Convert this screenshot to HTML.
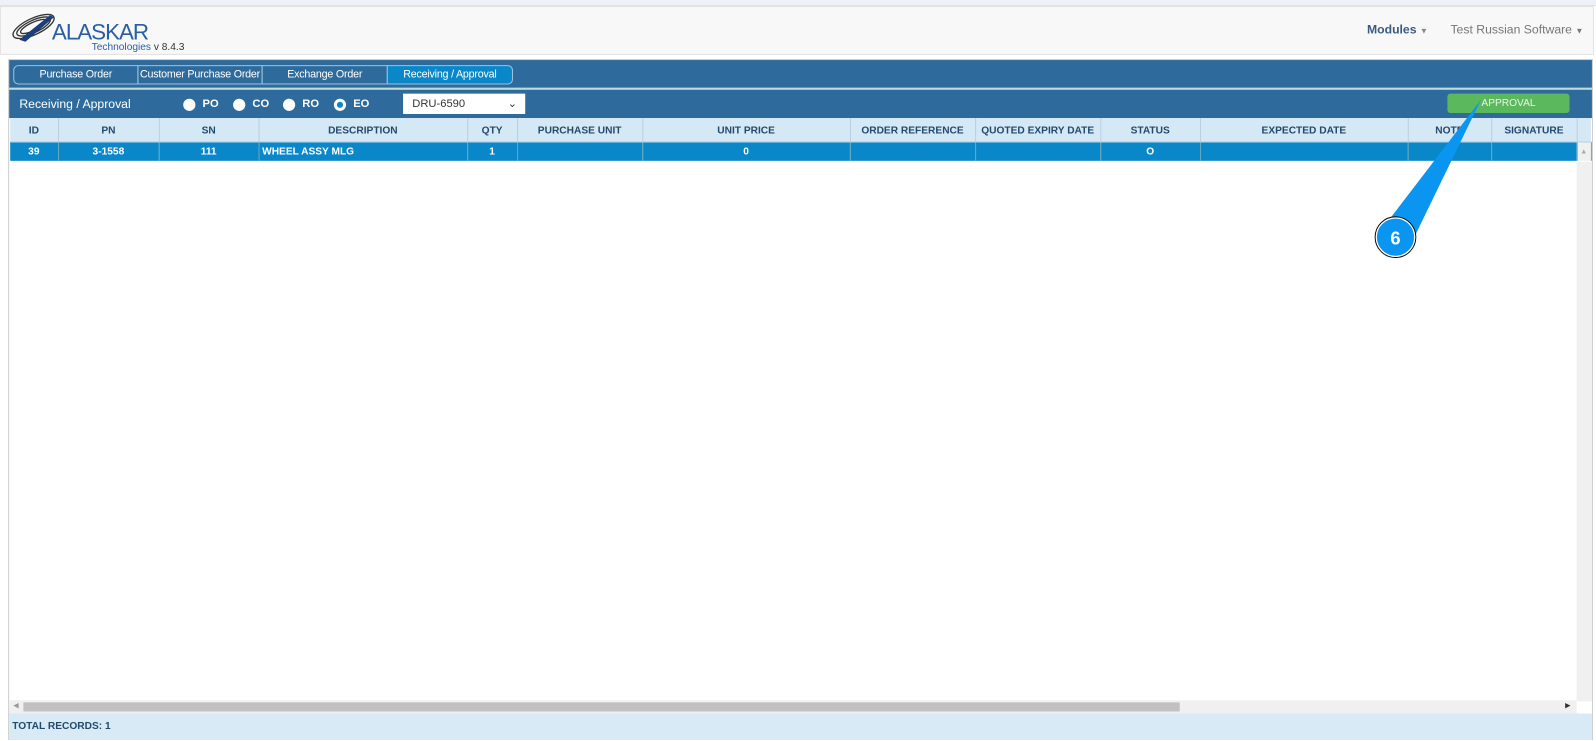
<!DOCTYPE html>
<html><head><meta charset="utf-8"><style>
*{box-sizing:border-box;margin:0;padding:0}
body{width:1596px;height:741px;background:#fff;font-family:"Liberation Sans",sans-serif;position:relative;overflow:hidden}
#w{position:absolute;left:0;top:0;width:1568px;height:728px;transform:scale(1.01786);transform-origin:0 0}
.top{position:absolute;left:0;top:0;width:1568px;height:6px;background:#eef2f8;border-bottom:1px solid #dde}
.nav{position:absolute;left:0;top:6px;width:1566px;height:48px;background:#f8f8f8;border:1px solid #e3e3e3}
.panel{position:absolute;left:8px;top:58px;width:1557px;height:669px;border:1px solid #ccc;background:#fff}
.tabs{position:absolute;left:0;top:0;width:100%;height:28px;background:#2e6b9c;border-bottom:1px solid #9cc}
.tab{position:absolute;top:5px;height:19px;border:1px solid #9cc3de;color:#fff;font-size:10.5px;text-align:center;line-height:17px;white-space:nowrap;overflow:hidden;letter-spacing:-0.2px}
.filt{position:absolute;left:0;top:29px;width:100%;height:28px;background:#2e6b9c;color:#fff}
.rad{position:absolute;top:9px;width:12px;height:12px;border-radius:50%;background:#fff}
.rl{position:absolute;top:8px;font-size:11px;font-weight:bold}
table{position:absolute;left:1px;top:57px;border-collapse:collapse;font-size:10px;font-weight:bold}
th{background:#d5e8f6;color:#234a6b;height:23px;padding-top:2px;border-right:1px solid #b8cfe0;border-bottom:1px solid #b8cfe0;white-space:nowrap}
td{background:#0a87c9;color:#fff;height:19px;padding-top:1px;border-right:1px solid #6ab;text-align:center}
</style></head><body><div id="w">
<div class="top"></div>
<div class="nav">
<svg style="position:absolute;left:8px;top:4px" width="50" height="32" viewBox="0 0 50 32"><g fill="none" stroke="#333" stroke-width="1.3"><ellipse cx="24" cy="15" rx="22" ry="8" transform="rotate(-25 24 15)"/><ellipse cx="24" cy="15" rx="18" ry="6" transform="rotate(-25 24 15)"/><ellipse cx="24" cy="15" rx="14" ry="4" transform="rotate(-25 24 15)"/></g><path d="M10 28 L40 4 L44 6 L16 30Z" fill="#1a3f7a"/></svg>
<div style="position:absolute;left:50px;top:12px;font-size:22px;color:#2a5ea3;letter-spacing:-1px">ALASKAR</div>
<div style="position:absolute;left:89px;top:34px;font-size:10px;color:#2a5ea3">Technologies <span style="color:#333">v 8.4.3</span></div>
<div style="position:absolute;left:1342px;top:15px;font-size:12px;font-weight:bold;color:#3a5a80">Modules <span style="font-size:8px;color:#888">▼</span></div>
<div style="position:absolute;left:1424px;top:15px;font-size:12px;color:#777">Test Russian Software <span style="font-size:8px">▼</span></div>
</div>
<div class="panel">
<div class="tabs">
<div class="tab" style="left:4px;width:123px;border-radius:5px 0 0 5px">Purchase Order</div>
<div class="tab" style="left:126px;width:123px">Customer Purchase Order</div>
<div class="tab" style="left:248px;width:124px">Exchange Order</div>
<div class="tab" style="left:371px;width:124px;background:#0a87c9;border-radius:0 5px 5px 0">Receiving / Approval</div>
</div>
<div class="filt">
<div style="position:absolute;left:10px;top:7px;font-size:12px">Receiving / Approval</div>
<div class="rad" style="left:171px"></div><div class="rl" style="left:190px">PO</div>
<div class="rad" style="left:220px"></div><div class="rl" style="left:239px">CO</div>
<div class="rad" style="left:269px"></div><div class="rl" style="left:288px">RO</div>
<div class="rad" style="left:319px;border:3px solid #fff;background:#0a87c9"></div><div class="rl" style="left:338px">EO</div>
<div style="position:absolute;left:387px;top:4px;width:120px;height:20px;background:#fff;color:#333;font-size:11px;line-height:20px;padding-left:9px">DRU-6590<span style="position:absolute;right:8px;top:0">⌄</span></div>
<div style="position:absolute;left:1413px;top:4px;width:120px;height:19px;background:#5cb85c;border-radius:3px;color:#e8f5e8;font-size:10px;text-align:center;line-height:19px">APPROVAL</div>
</div>
<table>
<tr><th style="width:47px">ID</th><th style="width:99px">PN</th><th style="width:98px">SN</th><th style="width:205px">DESCRIPTION</th><th style="width:49px">QTY</th><th style="width:123px">PURCHASE UNIT</th><th style="width:204px">UNIT PRICE</th><th style="width:123px">ORDER REFERENCE</th><th style="width:123px">QUOTED EXPIRY DATE</th><th style="width:98px">STATUS</th><th style="width:204px">EXPECTED DATE</th><th style="width:82px">NOTE</th><th style="width:84px">SIGNATURE</th><th style="width:14px;border-right:0"></th></tr>
<tr><td>39</td><td>3-1558</td><td>111</td><td style="text-align:left;padding-left:3px">WHEEL ASSY MLG</td><td>1</td><td></td><td>0</td><td></td><td></td><td>O</td><td></td><td></td><td></td><td style="background:#f0f0f0;color:#aaa;font-size:7px">▲</td></tr>
</table>
<div style="position:absolute;left:1540px;top:100px;width:15px;height:530px;background:#f0f0f0"></div>
<div style="position:absolute;left:0;top:629px;width:1540px;height:13px;background:#f0f0f0"><div style="position:absolute;left:14px;top:2px;width:1136px;height:9px;background:#c1c1c1"></div><span style="position:absolute;left:4px;top:1px;font-size:7px;color:#999">◀</span><span style="position:absolute;right:6px;top:1px;font-size:7px;color:#333">▶</span></div>
<div style="position:absolute;left:0;top:642px;width:100%;height:26px;background:#d9eaf7;color:#234a6b;font-size:10px;font-weight:bold;line-height:26px;padding-left:3px">TOTAL RECORDS: 1</div>
</div>
<svg style="position:absolute;left:0;top:0" width="1568" height="728"><polygon points="1455,98 1360,222 1388,236" fill="#0a96f0"/><circle cx="1371" cy="233" r="19" fill="#0a96f0" stroke="#fff" stroke-width="1.5"/><circle cx="1371" cy="233" r="20" fill="none" stroke="#111" stroke-width="1"/><text x="1371" y="240" font-family="Liberation Sans" font-weight="bold" font-size="18" fill="#fff" text-anchor="middle">6</text></svg>
</div></body></html>
